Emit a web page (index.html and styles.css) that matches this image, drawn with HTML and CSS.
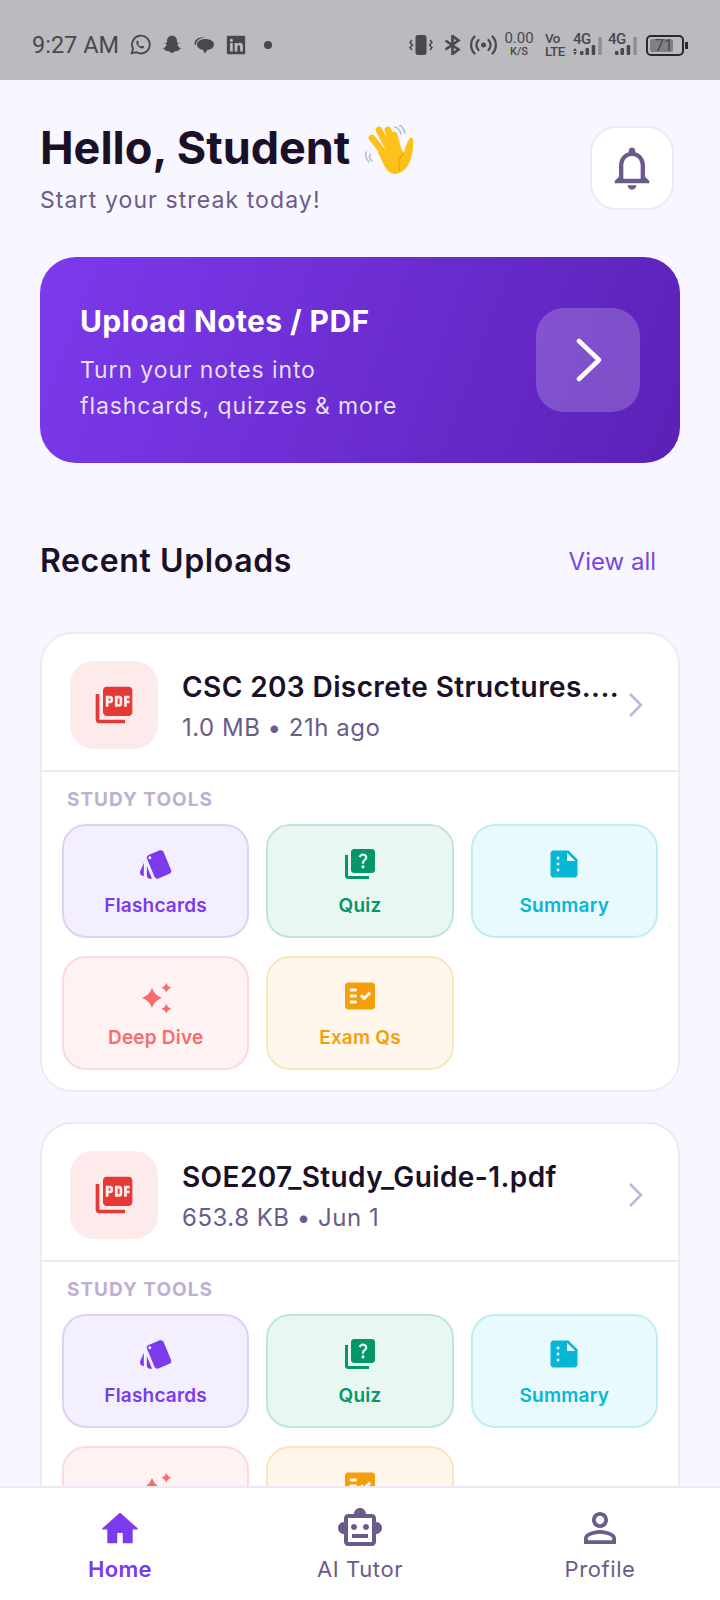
FILE: index.html
```html
<!DOCTYPE html>
<html lang="en">

<head>
    <meta charset="UTF-8">
    <meta name="viewport" content="width=device-width, initial-scale=1.0">
    <title>Home - Student</title>
    <link rel="stylesheet" href="styles.css">
</head>

<body>
    <svg class="sprite" xmlns="http://www.w3.org/2000/svg">
        <symbol id="i-pdf" viewBox="0 0 24 24"><path d="M20 2H8c-1.1 0-2 .9-2 2v12c0 1.1.9 2 2 2h12c1.1 0 2-.9 2-2V4c0-1.1-.9-2-2-2zm-8.5 7.5c0 .83-.67 1.5-1.5 1.5H9v2H7.5V7H10c.83 0 1.5.67 1.5 1.5v1zm5 2c0 .83-.67 1.5-1.5 1.5h-2.5V7H15c.83 0 1.5.67 1.5 1.5v3zm4-3H19v1h1.5V11H19v2h-1.5V7h3v1.5zM9 9.5h1v-1H9v1zM4 6H2v14c0 1.1.9 2 2 2h14v-2H4V6zm10 5.5h1v-3h-1v3z"/></symbol>
        <symbol id="i-cards" viewBox="0 0 24 24"><path d="M2.53 19.65l1.34.56v-9.03l-2.43 5.86c-.41 1.02.08 2.19 1.09 2.61zm19.5-3.7L17.07 3.98c-.31-.75-1.04-1.21-1.81-1.23-.26 0-.53.04-.79.15L7.1 5.95c-.75.31-1.21 1.03-1.23 1.8-.01.27.04.54.15.8l4.96 11.97c.31.76 1.05 1.22 1.83 1.23.26 0 .52-.05.77-.15l7.36-3.05c1.02-.42 1.51-1.59 1.09-2.6zM7.88 8.75c-.55 0-1-.45-1-1s.45-1 1-1 1 .45 1 1-.45 1-1 1zm-2 11c0 1.1.9 2 2 2h1.45l-3.45-8.34v6.34z"/></symbol>
        <symbol id="i-quiz" viewBox="0 0 24 24"><path d="M4 6H2v14c0 1.1.9 2 2 2h14v-2H4V6zm16-4H8c-1.1 0-2 .9-2 2v12c0 1.1.9 2 2 2h12c1.1 0 2-.9 2-2V4c0-1.1-.9-2-2-2zm-5.99 13c-.59 0-1.05-.47-1.05-1.05 0-.59.47-1.04 1.05-1.04.59 0 1.04.45 1.04 1.04-.01.58-.45 1.05-1.04 1.05zm2.5-6.17c-.63.93-1.23 1.21-1.56 1.81-.13.24-.18.4-.18 1.18h-1.52c0-.41-.06-1.08.26-1.65.41-.73 1.18-1.16 1.63-1.8.48-.68.21-1.94-1.14-1.94-.88 0-1.32.67-1.5 1.23l-1.37-.57C11.51 5.96 12.52 5 13.99 5c1.23 0 2.08.56 2.51 1.26.37.61.58 1.73.01 2.57z"/></symbol>
        <symbol id="i-summary" viewBox="0 0 24 24"><path d="M15 3H5c-1.1 0-1.99.9-1.99 2L3 19c0 1.1.89 2 1.99 2H19c1.1 0 2-.9 2-2V9l-6-6zM8 17c-.55 0-1-.45-1-1s.45-1 1-1 1 .45 1 1-.45 1-1 1zm0-4c-.55 0-1-.45-1-1s.45-1 1-1 1 .45 1 1-.45 1-1 1zm0-4c-.55 0-1-.45-1-1s.45-1 1-1 1 .45 1 1-.45 1-1 1zm6 1V4.5l5.5 5.5H14z"/></symbol>
        <symbol id="i-sparkle" viewBox="0 0 36 36"><path d="M14 10Q16.500 17.500 24 20 16.500 22.500 14 30 11.500 22.500 4 20 11.500 17.500 14 10zM28.300 4.700Q29.500 8.500 33.300 9.700 29.500 10.900 28.300 14.700 27.100 10.900 23.300 9.700 27.100 8.500 28.300 4.700zM28.300 25.700Q29.500 29.500 33.300 30.700 29.500 31.900 28.300 35.700 27.100 31.900 23.300 30.700 27.100 29.500 28.300 25.700z"/></symbol>
        <symbol id="i-exam" viewBox="0 0 24 24"><path d="M20 3H4c-1.100 0-2 .9-2 2v14c0 1.100.9 2 2 2h16c1.100 0 2-.9 2-2V5c0-1.100-.9-2-2-2zM9 17H6c-.55 0-1-.45-1-1s.45-1 1-1h3c.55 0 1 .45 1 1s-.45 1-1 1zm0-4H6c-.55 0-1-.45-1-1s.45-1 1-1h3c.55 0 1 .45 1 1s-.45 1-1 1zm0-4H6c-.55 0-1-.45-1-1s.45-1 1-1h3c.55 0 1 .45 1 1s-.45 1-1 1zm5.820 6L12 12.160l1.410-1.410 1.410 1.420L17.990 9l1.420 1.420L14.820 15z"/></symbol>
        <symbol id="i-chevron" viewBox="0 0 24 24"><path d="M6 1l11 11L6 23" fill="none" stroke="#c0b4da" stroke-width="2.500"/></symbol>
    </svg>

    <div class="status-bar">
        <div class="status-left">
            <span class="clock">9:27 AM</span>
            <svg class="s-icon" viewBox="0 0 24 24"><path fill="none" stroke="currentColor" stroke-width="2" d="M3 21l1.400-5A9.700 9.700 0 1 1 8 19.800z"/><path d="M8.800 7.500c-.5.400-1 1.200-.8 2.300.5 2.600 3.400 5.500 6 6 1.200.2 2-.3 2.400-1 .2-.4.200-.9-.2-1.100l-1.700-.9c-.4-.2-.7-.1-1 .2l-.5.600c-1.400-.5-2.600-1.700-3.100-3l.6-.6c.3-.3.300-.6.100-1l-.7-1.600c-.2-.5-.6-.4-1.100.1z"/></svg>
            <svg class="s-icon" viewBox="0 0 24 24"><path d="M12 2c3.400 0 5.400 2.400 5.400 5.400v2.200c.6.100 1.500-.4 1.900 0 .5.500 0 1.200-1.500 1.800.6 2.200 2.200 3.500 4 4.200.4.600-.9 1.200-2.400 1.400-.3.500-.1 1.300-.6 1.400-.9.200-2.200-.3-3.400.4-1 .6-1.800 1.700-3.400 1.700s-2.400-1.100-3.400-1.700c-1.200-.7-2.500-.2-3.400-.4-.5-.1-.3-.9-.6-1.400-1.500-.2-2.800-.8-2.400-1.400 1.800-.7 3.400-2 4-4.200-1.500-.6-2-1.300-1.500-1.800.4-.4 1.300.1 1.900 0V7.400C6.600 4.400 8.600 2 12 2z"/></svg>
            <svg class="s-icon" viewBox="1 1 22 22"><path d="M2.500 9.500C3.300 6.500 6.500 4.300 11 4.300c1 0 1.600.1 1.600.1-3.400.3-7 1.900-8 4.600l-.8 3.400c-.8-.9-1.600-1.500-1.300-2.900z"/><path d="M5 11.500C5 8.200 9 6 13.500 6s8.500 2.200 8.500 5.500-3.500 5.300-6.800 5.400L13 20.800l-2.200-4C7.800 16.300 5 14.300 5 11.500z"/></svg>
            <svg class="s-icon" viewBox="0 0 24 24"><path fill-rule="evenodd" d="M3 2h18a1 1 0 0 1 1 1v18a1 1 0 0 1-1 1H3a1 1 0 0 1-1-1V3a1 1 0 0 1 1-1zm2.500 7.800V19h3V9.800zM7 5.200a1.700 1.700 0 1 0 0 3.400 1.700 1.700 0 0 0 0-3.400zM10.500 9.800V19h3v-4.800c0-2.600 3-2.800 3-.1V19h3v-5.600c0-4.600-4.800-4.500-6-2.200V9.800z"/></svg>
            <span class="s-dot"></span>
        </div>
        <div class="status-right">
            <svg class="vib" viewBox="0 0 24 22"><rect x="6.500" y="1" width="11" height="20" rx="2.500"/><path fill="none" stroke="currentColor" stroke-width="1.500" d="M3 6L1 8.500l2.500 2.500L1 13.500 3 16M21 6l2 2.500-2.500 2.500 2.500 2.500L21 16"/></svg>
            <svg class="bt" viewBox="0 0 20 20"><path fill="none" stroke="currentColor" stroke-width="2.600" d="M2.500 5.500l13 9-6 4.500V1l6 4.500-13 9"/></svg>
            <svg class="hot" viewBox="0 0 27 20"><circle cx="13.500" cy="10" r="2.500"/><path fill="none" stroke="currentColor" stroke-width="2.200" stroke-linecap="round" d="M8.500 5c-2.800 2.800-2.800 7.200 0 10M18.500 5c2.800 2.800 2.800 7.200 0 10M4.500 1.500c-4.500 4.500-4.500 12.500 0 17M22.500 1.500c4.500 4.500 4.500 12.500 0 17"/></svg>
            <div class="speed"><span>0.00</span><small>K/S</small></div>
            <div class="volte"><span>Vo</span><span>LTE</span></div>
            <div class="net">
                <span class="net-label">4G</span>
                <svg viewBox="0 0 29 20"><path d="M2 13l2 3H0zM2 20l-2-3h4z"/><rect x="7" y="16" width="3.500" height="4" rx="1"/><rect x="12.500" y="13" width="3.500" height="7" rx="1"/><rect x="18.700" y="10" width="3.500" height="10" rx="1"/><rect class="bar-off" x="25.300" y="2" width="3.500" height="18"/></svg>
            </div>
            <div class="net">
                <span class="net-label">4G</span>
                <svg viewBox="0 0 29 20"><rect x="7" y="16" width="3.500" height="4" rx="1"/><rect x="12.500" y="13" width="3.500" height="7" rx="1"/><rect x="18.700" y="10" width="3.500" height="10" rx="1"/><rect class="bar-off" x="25.300" y="2" width="3.500" height="18"/></svg>
            </div>
            <div class="battery"><div class="battery-fill"></div><span>71</span></div>
            <span class="battery-tip"></span>
        </div>
    </div>

    <main class="content">
        <div class="header">
            <div>
                <h1 class="hello">Hello, Student
                    <svg class="wave" viewBox="0 0 50 50">
                        <g fill="none" stroke="#b5c4cc" stroke-width="1.600" stroke-linecap="round">
                            <path d="M32 2c3 1 5 3 6 7M36 0c3 1 5 4 6 8"/>
                            <path d="M3 27c-1 4 0 7 3 10M7 29c-1 2 0 5 2 7"/>
                        </g>
                        <g fill="none" stroke="#fcc21b" stroke-width="6.800" stroke-linecap="round">
                            <path d="M24 32L9 13M28 28L16 5M32 26L25 5M36 28L31 10"/>
                        </g>
                        <path fill="#fcc21b" d="M15 27L37 22l4 6c1-6 3-11 6-15 3-1 4 1 3.500 4-.5 9-1.500 14-3.500 19-3 8-9 13-15 13-8 0-12-10-17-22z"/>
                        <path fill="none" stroke="#e8a400" stroke-width="1.200" d="M41 28c-5 5-7 11-4 18"/>
                    </svg>
                </h1>
                <p class="streak">Start your streak today!</p>
            </div>
            <button class="bell">
                <svg viewBox="0 0 24 24"><path d="M12 22c1.100 0 2-.9 2-2h-4c0 1.100.9 2 2 2zm6-6v-5c0-3.070-1.630-5.640-4.500-6.320V4c0-.83-.67-1.500-1.500-1.500s-1.500.67-1.500 1.500v.68C7.640 5.360 6 7.920 6 11v5l-2 2v1h16v-1l-2-2zm-2 1H8v-6c0-2.480 1.510-4.500 4-4.500s4 2.020 4 4.500v6z"/></svg>
            </button>
        </div>

        <div class="upload-banner">
            <div>
                <h2>Upload Notes / PDF</h2>
                <p>Turn your notes into<br>flashcards, quizzes &amp; more</p>
            </div>
            <div class="arrow-box">
                <svg viewBox="0 0 44 44"><path d="M13 3l20 19-20 19" fill="none" stroke="#fff" stroke-width="4.500" stroke-linecap="round" stroke-linejoin="round"/></svg>
            </div>
        </div>

        <div class="section-head">
            <h2>Recent Uploads</h2>
            <a href="#">View all</a>
        </div>

        <div class="file-card">
            <div class="file-head">
                <div class="pdf-box"><svg viewBox="0 0 24 24"><use href="#i-pdf"/></svg></div>
                <div class="file-info">
                    <div class="file-name">CSC 203 Discrete Structures....</div>
                    <div class="file-meta">1.0 MB • 21h ago</div>
                </div>
                <svg class="chevron" viewBox="0 0 24 24"><use href="#i-chevron"/></svg>
            </div>
            <div class="file-body">
                <div class="tools-label">STUDY TOOLS</div>
                <div class="tools">
                    <a class="tool purple"><svg viewBox="0 0 24 24"><use href="#i-cards"/></svg><span>Flashcards</span></a>
                    <a class="tool green"><svg viewBox="0 0 24 24"><use href="#i-quiz"/></svg><span>Quiz</span></a>
                    <a class="tool cyan"><svg viewBox="0 0 24 24"><use href="#i-summary"/></svg><span>Summary</span></a>
                    <a class="tool red"><svg viewBox="0 0 36 36"><use href="#i-sparkle"/></svg><span>Deep Dive</span></a>
                    <a class="tool amber"><svg viewBox="0 0 24 24"><use href="#i-exam"/></svg><span>Exam Qs</span></a>
                </div>
            </div>
        </div>

        <div class="file-card">
            <div class="file-head">
                <div class="pdf-box"><svg viewBox="0 0 24 24"><use href="#i-pdf"/></svg></div>
                <div class="file-info">
                    <div class="file-name">SOE207_Study_Guide-1.pdf</div>
                    <div class="file-meta">653.8 KB • Jun 1</div>
                </div>
                <svg class="chevron" viewBox="0 0 24 24"><use href="#i-chevron"/></svg>
            </div>
            <div class="file-body">
                <div class="tools-label">STUDY TOOLS</div>
                <div class="tools">
                    <a class="tool purple"><svg viewBox="0 0 24 24"><use href="#i-cards"/></svg><span>Flashcards</span></a>
                    <a class="tool green"><svg viewBox="0 0 24 24"><use href="#i-quiz"/></svg><span>Quiz</span></a>
                    <a class="tool cyan"><svg viewBox="0 0 24 24"><use href="#i-summary"/></svg><span>Summary</span></a>
                    <a class="tool red"><svg viewBox="0 0 36 36"><use href="#i-sparkle"/></svg></a>
                    <a class="tool amber"><svg viewBox="0 0 24 24"><use href="#i-exam"/></svg></a>
                </div>
            </div>
        </div>
    </main>

    <nav class="bottom-nav">
        <a class="nav-item active">
            <svg viewBox="-2 -2.500 28 28"><path d="M10 20v-6h4v6h5v-8h3L12 3 2 12h3v8z" stroke="currentColor" stroke-width=".8" stroke-linejoin="round"/></svg>
            <span>Home</span>
        </a>
        <a class="nav-item">
            <svg viewBox="0 0 24 24"><path d="M20 9V7c0-1.100-.9-2-2-2h-3c0-1.660-1.340-3-3-3S9 3.340 9 5H6c-1.100 0-2 .9-2 2v2c-1.660 0-3 1.340-3 3s1.340 3 3 3v4c0 1.100.9 2 2 2h12c1.100 0 2-.9 2-2v-4c1.660 0 3-1.340 3-3s-1.340-3-3-3zm-2 10H6V7h12v12zm-9-6c-.83 0-1.500-.67-1.500-1.500S8.170 10 9 10s1.500.67 1.500 1.500S9.830 13 9 13zm7.500-1.500c0 .83-.67 1.500-1.500 1.500s-1.500-.67-1.500-1.500.67-1.500 1.500-1.500 1.500.67 1.500 1.500zM8 15h8v2H8v-2z"/></svg>
            <span>AI Tutor</span>
        </a>
        <a class="nav-item">
            <svg viewBox="0 0 24 24"><path d="M12 5.900c1.160 0 2.100.94 2.100 2.100s-.94 2.100-2.100 2.100S9.900 9.160 9.900 8s.94-2.100 2.100-2.100m0 9c2.970 0 6.100 1.460 6.100 2.100v1.100H5.900V17c0-.64 3.130-2.100 6.100-2.100M12 4C9.790 4 8 5.790 8 8s1.790 4 4 4 4-1.790 4-4-1.790-4-4-4zm0 9c-2.670 0-8 1.340-8 4v3h16v-3c0-2.660-5.330-4-8-4z"/></svg>
            <span>Profile</span>
        </a>
    </nav>
</body>

</html>
```

FILE: styles.css
```css
* {
    box-sizing: border-box;
}

body {
    font-family: Inter, "Noto Sans", sans-serif;
    background-color: #f8f6ff;
    color: #1a1028;
    margin: 0;
    padding: 0;
    width: 720px;
    height: 1600px;
    display: flex;
    flex-direction: column;
    overflow: hidden;
}

.sprite {
    display: none;
}

/* status bar */
.status-bar {
    flex: none;
    height: 80px;
    padding: 10px 32px 0 32px;
    background-color: #bbbabf;
    color: #49484d;
    display: flex;
    justify-content: space-between;
    align-items: center;
    font-family: Roboto, sans-serif;
}

.status-left,
.status-right {
    display: flex;
    align-items: center;
}

.status-right svg {
    fill: currentColor;
}

.clock {
    font-size: 23.5px;
    margin-right: 10px;
}

.s-icon {
    width: 22px;
    height: 22px;
    margin-right: 10px;
    fill: currentColor;
}

.s-dot {
    width: 8px;
    height: 8px;
    margin-left: 7px;
    border-radius: 50%;
    background-color: #49484d;
}

.vib {
    width: 24px;
    height: 22px;
    margin-right: 10px;
}

.bt {
    width: 20px;
    height: 20px;
    margin-right: 7px;
}

.hot {
    width: 27px;
    height: 20px;
    margin-right: 8px;
}

.speed {
    width: 28px;
    display: flex;
    flex-direction: column;
    align-items: center;
    font-size: 15px;
    line-height: 13px;
    margin-right: 12px;
}

.speed small {
    font-size: 11px;
    font-weight: 500;
}

.volte {
    width: 20px;
    margin-right: 8px;
    display: flex;
    flex-direction: column;
    font-size: 13.5px;
    line-height: 13px;
    font-weight: 500;
    letter-spacing: -0.6px;
}

.net {
    position: relative;
    width: 29px;
    height: 20px;
    margin-right: 6px;
}

.net svg {
    display: block;
    width: 29px;
    height: 20px;
}

.net + .net {
    margin-right: 9px;
}

.net-label {
    position: absolute;
    left: 0;
    top: -2px;
    font-size: 15px;
    line-height: 13px;
    font-weight: 500;
    letter-spacing: -0.5px;
}

.status-right .bar-off {
    fill: #8f8e93;
}

.battery {
    position: relative;
    width: 38px;
    height: 21px;
    padding-left: 7px;
    border: 2px solid #2a2a2d;
    border-radius: 5px;
    font-size: 16px;
    line-height: 17px;
}

.battery-fill {
    position: absolute;
    left: 2px;
    top: 2px;
    bottom: 2px;
    width: 23px;
    border-radius: 2px;
    background-color: #807f84;
}

.battery span {
    position: relative;
}

.battery-tip {
    width: 3px;
    height: 7px;
    margin-left: 1px;
    background-color: #2a2a2d;
}

/* main scroll area */
.content {
    flex: 1;
    min-height: 0;
    overflow: hidden;
    padding: 43px 40px 0;
}

.header {
    display: flex;
    justify-content: space-between;
    align-items: flex-start;
    padding-right: 6px;
    margin-bottom: 39px;
}

.hello {
    margin: 0;
    font-size: 45px;
    line-height: 50px;
    font-weight: 700;
    display: flex;
    align-items: flex-start;
    gap: 13px;
}

.wave {
    width: 50px;
    height: 50px;
    margin-top: 2px;
}

.streak {
    margin: 7px 0 0;
    font-size: 23px;
    line-height: 36px;
    letter-spacing: 1.1px;
    color: #6b5b8a;
}

.bell {
    width: 84px;
    height: 84px;
    margin-top: 3px;
    padding: 0;
    background-color: #fff;
    border: 2px solid #ece9f8;
    border-radius: 26px;
    display: flex;
    justify-content: center;
    align-items: center;
}

.bell svg {
    width: 52px;
    height: 52px;
    fill: #6b5b8a;
}

.upload-banner {
    padding: 44px 40px 39px;
    border-radius: 36px;
    background: linear-gradient(110deg, #7c3aed 0%, #5b21b6 100%);
    color: #fff;
    display: flex;
    justify-content: space-between;
    align-items: center;
}

.upload-banner h2 {
    margin: 0;
    font-size: 30px;
    line-height: 40px;
    font-weight: 700;
    letter-spacing: 0.4px;
}

.upload-banner p {
    margin: 11px 0 0;
    font-size: 23px;
    line-height: 36px;
    letter-spacing: 0.9px;
    color: rgba(255, 255, 255, 0.85);
}

.arrow-box {
    width: 104px;
    height: 104px;
    margin-bottom: 5px;
    border-radius: 28px;
    background-color: rgba(255, 255, 255, 0.2);
    display: flex;
    justify-content: center;
    align-items: center;
}

.arrow-box svg {
    width: 44px;
    height: 44px;
}

.section-head {
    display: flex;
    justify-content: space-between;
    align-items: center;
    padding-right: 24px;
    margin: 78px 0 51px;
}

.section-head h2 {
    margin: 0;
    font-size: 32px;
    line-height: 40px;
    font-weight: 600;
    letter-spacing: 0.6px;
}

.section-head a {
    font-size: 24px;
    color: #7a45dd;
    text-decoration: none;
}

/* upload cards */
.file-card {
    margin-bottom: 30px;
    background-color: #fff;
    border: 2px solid #ece9f8;
    border-radius: 32px;
}

.file-head {
    display: flex;
    align-items: center;
    padding: 27px 30px 21px 28px;
    border-bottom: 2px solid #ece9f8;
}

.pdf-box {
    flex: none;
    width: 88px;
    height: 88px;
    margin-right: 24px;
    border-radius: 24px;
    background-color: #fdeaea;
    display: flex;
    justify-content: center;
    align-items: center;
}

.pdf-box svg {
    width: 44px;
    height: 44px;
    fill: #e53935;
}

.file-info {
    flex: 1;
    min-width: 0;
    padding-top: 2px;
}

.file-name {
    font-size: 28px;
    line-height: 40px;
    font-weight: 600;
    letter-spacing: 0.4px;
    white-space: nowrap;
}

.file-meta {
    margin-top: 3px;
    font-size: 24px;
    line-height: 36px;
    letter-spacing: 0.5px;
    color: #6b5b8a;
}

.chevron {
    flex: none;
    width: 24px;
    height: 24px;
}

.file-body {
    padding: 14px 20px 20px;
}

.tools-label {
    margin-left: 5px;
    margin-bottom: 10px;
    font-size: 19px;
    line-height: 28px;
    font-weight: 700;
    letter-spacing: 1px;
    color: #bdb0d4;
}

.tools {
    display: grid;
    grid-template-columns: repeat(3, 1fr);
    gap: 18px 17px;
}

.tool {
    height: 114px;
    padding-top: 20px;
    border: 2px solid;
    border-radius: 24px;
    display: flex;
    flex-direction: column;
    align-items: center;
    font-size: 19px;
    line-height: 26px;
    font-weight: 600;
    letter-spacing: 0.2px;
}

.tool svg {
    width: 36px;
    height: 36px;
    margin-bottom: 11px;
    fill: currentColor;
}

.tool.purple {
    background-color: #f4effe;
    border-color: #dfd0f8;
    color: #7c3aed;
}

.tool.green {
    background-color: #e9f7f2;
    border-color: #bfe6d8;
    color: #059669;
}

.tool.cyan {
    background-color: #e8fafd;
    border-color: #c0edf4;
    color: #06b6d4;
}

.tool.red {
    background-color: #fff2f2;
    border-color: #fdd9d9;
    color: #f76c6c;
}

.tool.amber {
    background-color: #fff7eb;
    border-color: #fde4bd;
    color: #f59e0b;
}

/* bottom nav */
.bottom-nav {
    flex: none;
    height: 114px;
    padding-top: 16px;
    background-color: #fff;
    border-top: 2px solid #ece8f6;
    display: flex;
}

.nav-item {
    flex: 1;
    display: flex;
    flex-direction: column;
    align-items: center;
    font-size: 22px;
    line-height: 32px;
    letter-spacing: 0.6px;
    color: #6b5b8a;
}

.nav-item svg {
    width: 48px;
    height: 48px;
    margin-bottom: 1px;
    fill: currentColor;
}

.nav-item.active {
    color: #7c3aed;
    font-weight: 600;
    letter-spacing: 0.3px;
}
```
